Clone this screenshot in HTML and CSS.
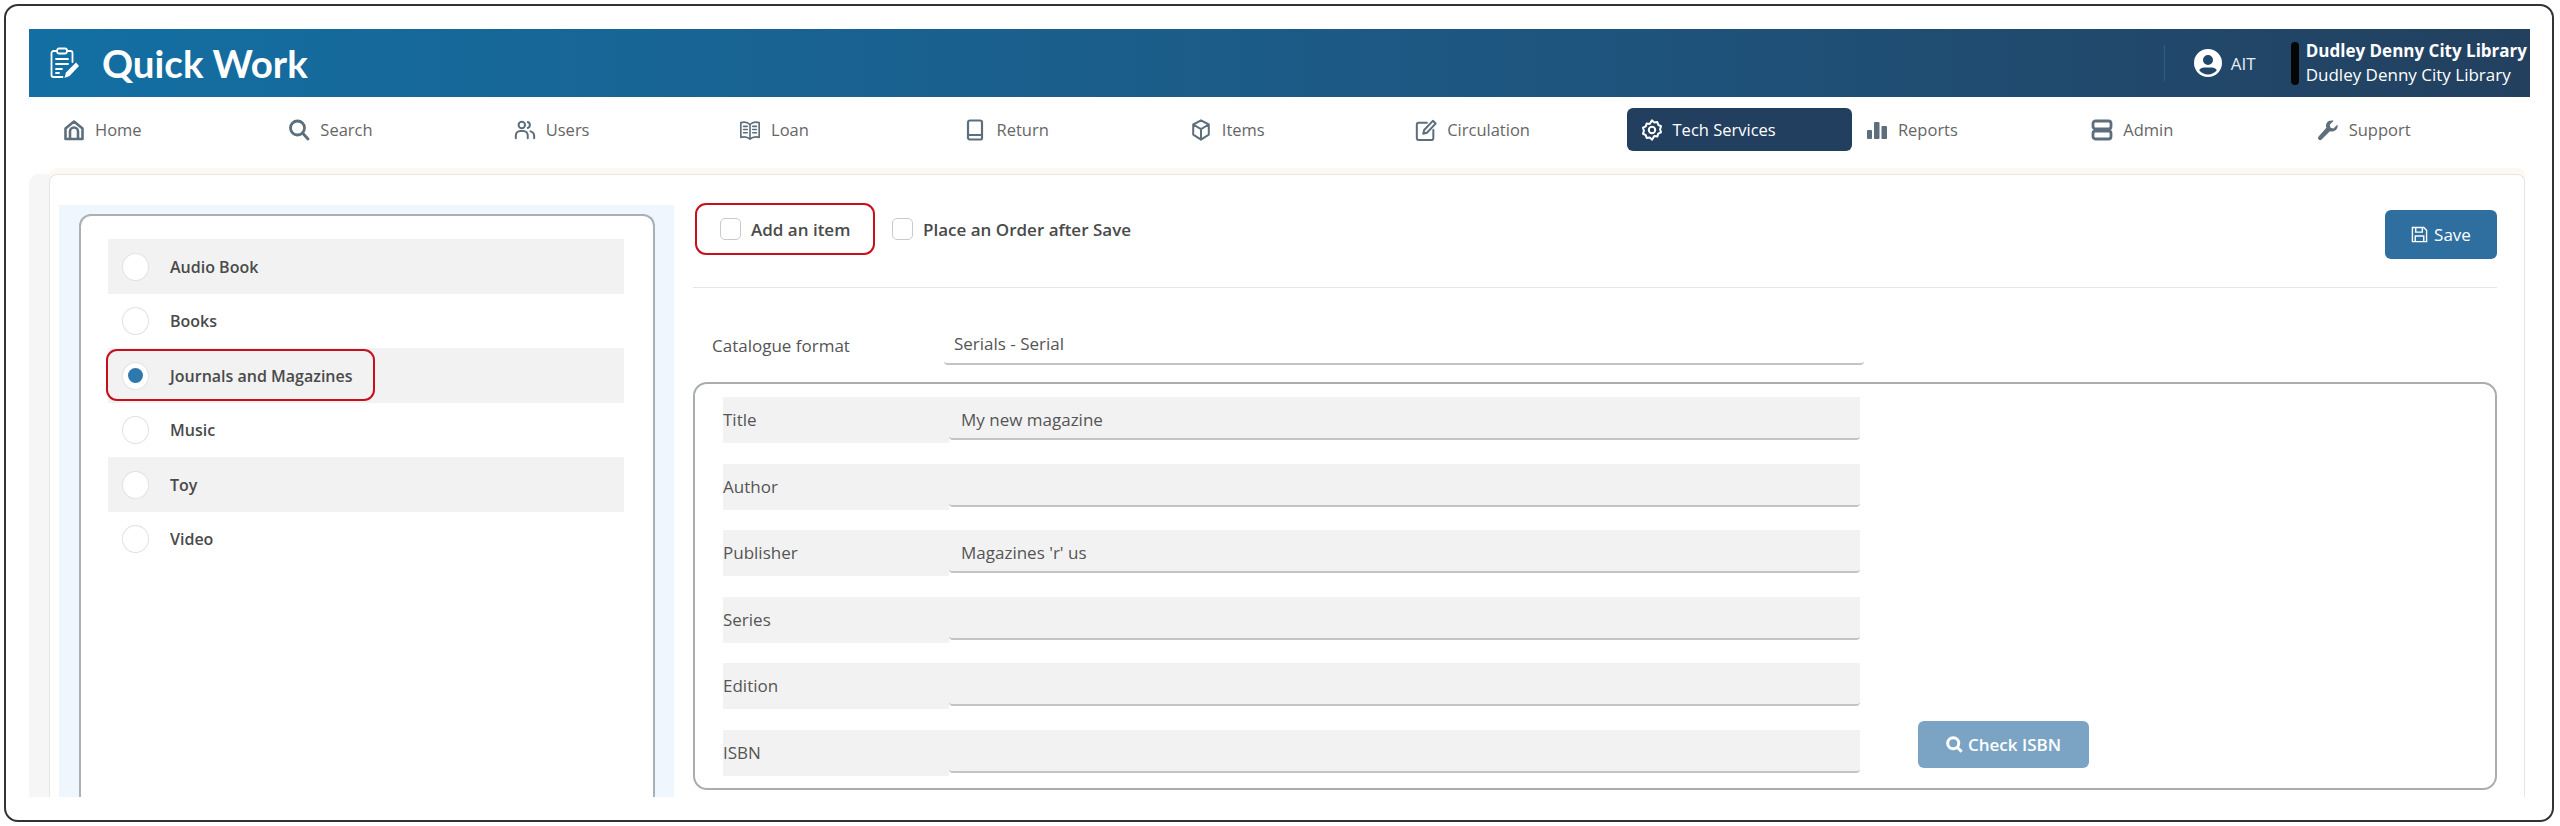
FILE: index.html
```html
<!DOCTYPE html>
<html lang="en">
<head>
    <meta charset="UTF-8">
    <title>Quick Work</title>
    <link rel="stylesheet" href="styles.css">
</head>
<body>
<div class="frame">
    <!-- Header -->
    <header class="topbar">
        <svg class="logo" viewBox="0 0 30 32" fill="none" stroke="#fff" stroke-width="1.8" stroke-linecap="round" stroke-linejoin="round">
            <path d="M7 4H3.5A2 2 0 0 0 1.5 6v22a2 2 0 0 0 2 2h9"/>
            <path d="M17 4h3.5a2 2 0 0 1 2 2v9"/>
            <rect x="7" y="1.5" width="10" height="5" rx="2"/>
            <path d="M6 12h12M6 17h12M6 22h6M6 26h3"/>
            <path d="M14.5 31l1.5-5.5L26 15.5l3 3.500L19.500 29z" fill="#fff" stroke="none"/>
        </svg>
        <div class="brand">Quick Work</div>
        <div class="user">
            <svg class="avatar" viewBox="0 0 28 28">
                <path fill="#fff" fill-rule="evenodd" d="M14 0a14 14 0 1 0 0 28 14 14 0 0 0 0-28zm0 6a5 5 0 1 1 0 10 5 5 0 0 1 0-10zm0 19.500c-3.600 0-6.800-1.700-8.800-4.300 1-1.700 2.800-2.700 4.800-2.700h8c2 0 3.800 1 4.800 2.700-2 2.600-5.200 4.300-8.800 4.300z"/>
            </svg>
            <span>AIT</span>
        </div>
        <div class="bar-black"></div>
        <div class="library">
            <strong>Dudley Denny City Library</strong>
            <span>Dudley Denny City Library</span>
        </div>
    </header>

    <!-- Main nav -->
    <nav class="mainnav">
        <a><svg class="ico ico-home" viewBox="0 0 22 22"><path d="M2.500 20V9.500L11 2.500l8.500 7V20zM7 20v-7.500a4 4 0 0 1 8 0V20"/></svg>Home</a>
        <a><svg class="ico ico-heavy" viewBox="0 0 22 22"><circle cx="9.500" cy="9" r="7"/><path d="M14.500 14l5.500 6"/></svg>Search</a>
        <a><svg class="ico" viewBox="0 0 24 22"><circle cx="8.500" cy="5.500" r="3.500"/><path d="M15 2.200a3.500 3.500 0 0 1 0 6.600"/><path d="M2 20v-3a5 5 0 0 1 5-5h3a5 5 0 0 1 5 5v3"/><path d="M18 12.500a5 5 0 0 1 4 4.500v3"/></svg>Users</a>
        <a><svg class="ico ico-thin" viewBox="0 0 24 22"><path d="M12 5C9.500 2.500 5.500 2 2 3v16c3.500-1 7.500-.5 10 2 2.500-2.500 6.500-3 10-2V3c-3.500-1-7.500-.5-10 2zM12 5v16"/><path d="M5 7h4M5 10.500h4M5 14h4M15 7h4M15 10.500h4M15 14h4"/></svg>Loan</a>
        <a><svg class="ico" viewBox="0 0 20 22"><path d="M3 16V3.500a2 2 0 0 1 2-2h10a2 2 0 0 1 2 2v16a1 1 0 0 1-1 1H5a2 2 0 0 1-2-2.500z"/><path d="M3 16h14"/></svg>Return</a>
        <a><svg class="ico" viewBox="0 0 22 24"><path d="M11 1.500l8.500 4.500v11L11 22.500 2.500 17V6zM2.500 6L11 11l8.500-5M11 11v11"/></svg>Items</a>
        <a><svg class="ico" viewBox="0 0 24 24"><path d="M13 4H4a2 2 0 0 0-2 2v15a2 2 0 0 0 2 2h14a2 2 0 0 0 2-2v-9"/><path d="M19.500 2l3 3L13 15l-4 1 1-4z"/></svg>Circulation</a>
        <a class="active"><svg class="ico" viewBox="0 0 22 24"><path d="M11 1.500l2.500 2.300 3.300-.6 1 3.200 3 1.500-1 3.300 1 3.300-3 1.500-1 3.200-3.300-.6L11 22.500l-2.500-2.300-3.300.6-1-3.200-3-1.500 1-3.300-1-3.300 3-1.500 1-3.200 3.300.6z"/><circle cx="11" cy="12" r="3.500"/></svg>Tech Services</a>
        <a><svg class="ico-fill" viewBox="0 0 22 22"><rect x="1" y="11" width="5" height="9" rx="1"/><rect x="8" y="3" width="5.500" height="17" rx="1"/><rect x="15.500" y="7" width="5.500" height="13" rx="1"/></svg>Reports</a>
        <a><svg class="ico ico-heavy" viewBox="0 0 22 22"><rect x="2" y="2" width="18" height="8" rx="2.500"/><rect x="2" y="12" width="18" height="8" rx="2.500"/></svg>Admin</a>
        <a><svg class="ico-fill" viewBox="0 0 22 22"><path d="M20.500 5.500l-4 4-3-.8-.8-3 4-4c-2.700-.8-5.500 0-6.800 2-1.100 1.700-1.100 3.500-.5 5L1.600 17.500a2.100 2.100 0 0 0 3 3l8.300-8.300c1.500.6 3.500.5 5.200-.6 2-1.400 3-3.600 2.400-6.100z"/></svg>Support</a>
    </nav>

    <!-- Content -->
    <div class="shade">
        <main class="card">
            <aside class="side">
                <div class="side-box">
                    <div class="type-row"><span class="radio"></span>Audio Book</div>
                    <div class="type-row"><span class="radio"></span>Books</div>
                    <div class="type-row">
                        <span class="radio radio-on"></span>Journals and Magazines
                        <span class="red-mark"></span>
                    </div>
                    <div class="type-row"><span class="radio"></span>Music</div>
                    <div class="type-row"><span class="radio"></span>Toy</div>
                    <div class="type-row"><span class="radio"></span>Video</div>
                </div>
            </aside>

            <section class="form">
                <div class="toolbar">
                    <label class="check-red"><span class="check"></span>Add an item</label>
                    <label class="check-plain"><span class="check"></span>Place an Order after Save</label>
                    <button class="btn-save">
                        <svg class="btn-ico" viewBox="0 0 18 18" fill="none" stroke="#fff" stroke-width="1.500"><path d="M1.500 1.500h12l3 3v12h-15z"/><path d="M5 1.500v5h7v-5M4.500 16.500v-6h9v6"/></svg>
                        Save
                    </button>
                </div>

                <div class="format-row">
                    <div class="format-label">Catalogue format</div>
                    <div class="format-value">Serials - Serial</div>
                </div>

                <div class="fields">
                    <div class="field-list">
                        <div class="field"><div class="field-label">Title</div><div class="field-value">My new magazine</div></div>
                        <div class="field"><div class="field-label">Author</div><div class="field-value"></div></div>
                        <div class="field"><div class="field-label">Publisher</div><div class="field-value">Magazines 'r' us</div></div>
                        <div class="field"><div class="field-label">Series</div><div class="field-value"></div></div>
                        <div class="field"><div class="field-label">Edition</div><div class="field-value"></div></div>
                        <div class="field"><div class="field-label">ISBN</div><div class="field-value"></div></div>
                    </div>
                    <button class="btn-isbn">
                        <svg class="btn-ico" viewBox="0 0 20 20" fill="none" stroke="#fff" stroke-width="3.500"><circle cx="8.500" cy="8.500" r="6.500"/><path d="M13 13l5.500 5.500"/></svg>
                        Check ISBN
                    </button>
                </div>
            </section>
        </main>
    </div>
</div>
</body>
</html>
```

FILE: styles.css
```css
html, body {
    margin: 0;
    padding: 0;
    background: #fff;
}
* {
    box-sizing: border-box;
}
body {
    font-family: "Open Sans", "Liberation Sans", sans-serif;
    color: #555;
    font-size: 16px;
}
.frame {
    margin: 4px 6px 4px 4px;
    height: 818px;
    border: 2px solid #333;
    border-radius: 14px;
    padding: 23px 22px 0 23px;
    overflow: hidden;
}

/* header */
.topbar {
    height: 68px;
    display: flex;
    align-items: center;
    color: #fff;
    background: linear-gradient(to right, #136fa3 0%, #1c5b87 50%, #23405f 100%);
    padding-left: 21px;
    padding-right: 3px;
}
.logo {
    width: 30px;
    height: 32px;
}
.brand {
    font-family: Lato, "Open Sans", sans-serif;
    font-size: 38.500px;
    font-weight: 700;
    margin-left: 22px;
}
.user {
    margin-left: auto;
    height: 36px;
    display: flex;
    align-items: center;
    border-left: 1px solid #2c5f85;
    padding-left: 29px;
    font-size: 17px;
    color: #e8eef3;
}
.avatar {
    width: 28px;
    height: 28px;
    margin-right: 9px;
}
.bar-black {
    width: 8px;
    height: 43px;
    background: #050505;
    border-radius: 4px;
    margin-left: 35px;
}
.library {
    display: flex;
    flex-direction: column;
    margin-left: 7px;
    font-size: 17px;
    line-height: 24px;
}
.library strong {
    font-weight: 700;
}

/* nav */
.mainnav {
    display: grid;
    grid-template-columns: repeat(11, 1fr);
    margin-left: 20px;
    margin-right: 2px;
    padding-top: 11px;
    height: 77px;
}
.mainnav a {
    height: 43px;
    display: flex;
    align-items: center;
    gap: 10px;
    padding-left: 14px;
    border-radius: 6px;
    color: #666;
    font-size: 16.500px;
}
.mainnav a.active {
    background: #233f5f;
    color: #fff;
}
.ico, .ico-fill {
    width: 22px;
    height: 22px;
    flex: none;
}
.ico {
    fill: none;
    stroke: #5d6f7c;
    stroke-width: 2.200;
    stroke-linejoin: round;
    stroke-linecap: round;
}
.ico-heavy {
    stroke-width: 2.800;
}
.ico-home {
    stroke-width: 2.600;
}
.ico-thin {
    stroke-width: 1.800;
}
.ico-fill {
    fill: #5d6f7c;
}
.active .ico {
    stroke: #fff;
}

/* card */
.shade {
    height: 623px;
    padding-left: 20px;
    margin-right: 5px;
    background: linear-gradient(to right, #f6f6f6, #e9e9e9);
    border-top-left-radius: 10px;
}
.card {
    height: 100%;
    display: flex;
    background: #fff;
    border: 1px solid #e8e6e3;
    border-bottom: 0;
    border-top-left-radius: 8px;
    border-top-right-radius: 8px;
    box-shadow: 0 -6px 0 #fdf8f1;
    padding: 28px 27px 0 9px;
}

/* left panel */
.side {
    width: 615px;
    flex: none;
    margin-top: 2px;
    padding: 9px 19px 0 20px;
    background: #eff6fd;
}
.side-box {
    height: 100%;
    background: #fff;
    border: 2px solid #a9b0b6;
    border-bottom: 0;
    border-radius: 12px 12px 0 0;
    padding: 23px 29px 0 27px;
}
.type-row {
    position: relative;
    height: 54.500px;
    display: flex;
    align-items: center;
    padding-left: 14px;
    padding-top: 1px;
    font-size: 16px;
    font-weight: 600;
    color: #4a4a4a;
}
.type-row:nth-child(odd) {
    background: #f2f2f2;
}
.radio {
    width: 27px;
    height: 28px;
    margin-right: 21px;
    background: #fff;
    border: 1px solid #e2e2e2;
    border-radius: 50%;
    display: flex;
    align-items: center;
    justify-content: center;
}
.radio-on::after {
    content: "";
    width: 15px;
    height: 15px;
    border-radius: 50%;
    background: #2f78ad;
}
.red-mark {
    position: absolute;
    left: -2px;
    top: 1px;
    width: 269px;
    height: 52px;
    border: 2px solid #c8101c;
    border-radius: 11px;
}

/* right form */
.form {
    flex: 1;
    margin-left: 19px;
}
.toolbar {
    height: 85px;
    display: flex;
    align-items: flex-start;
    border-bottom: 1px solid #e6e6e6;
    font-size: 17px;
    font-weight: 600;
    color: #4a4a4a;
}
.check {
    width: 21px;
    height: 22px;
    margin-right: 10px;
    background: #fff;
    border: 1px solid #c9c9c9;
    border-radius: 5px;
    flex: none;
}
.check-red, .check-plain {
    display: flex;
    align-items: center;
}
.check-red {
    width: 180px;
    height: 52px;
    margin-left: 2px;
    padding-left: 23px;
    border: 2px solid #c8101c;
    border-radius: 11px;
}
.check-plain {
    height: 52px;
    margin-left: 17px;
}
.btn-save {
    margin-left: auto;
    margin-top: 7px;
    width: 112px;
    height: 49px;
    background: #2f6f9f;
    color: #fff;
    border: 0;
    border-radius: 6px;
    font: 500 17px "Open Sans", sans-serif;
    display: flex;
    align-items: center;
    justify-content: center;
    gap: 6px;
}
.btn-ico {
    width: 17px;
    height: 17px;
}
.format-row {
    display: flex;
    margin-top: 38px;
    font-size: 17px;
}
.format-label {
    width: 251px;
    padding-left: 19px;
    height: 39px;
    display: flex;
    align-items: center;
}
.format-value {
    width: 920px;
    height: 39px;
    padding-left: 10px;
    line-height: 36px;
    border-bottom: 2px solid #c4c4c4;
    border-radius: 0 0 4px 4px;
}
.fields {
    display: flex;
    height: 408px;
    margin-top: 17px;
    border: 2px solid #a9adb0;
    border-radius: 14px;
    padding: 13px 0 0 28px;
    font-size: 17px;
}
.field-list {
    width: 1137px;
    display: flex;
    flex-direction: column;
    gap: 20.500px;
}
.field {
    display: flex;
    height: 46px;
}
.field-label {
    width: 226px;
    background: #f2f2f2;
    line-height: 46px;
}
.field-value {
    flex: 1;
    height: 43px;
    padding-left: 12px;
    line-height: 45px;
    background: #f2f2f2;
    border-bottom: 2px solid #c4c4c4;
    border-radius: 0 0 4px 4px;
}
.btn-isbn {
    align-self: flex-end;
    margin: 0 0 20px 58px;
    width: 171px;
    height: 47px;
    background: #7ba4c4;
    color: #fff;
    border: 0;
    border-radius: 6px;
    font: 600 17px "Open Sans", sans-serif;
    display: flex;
    align-items: center;
    justify-content: center;
    gap: 5px;
}
```
